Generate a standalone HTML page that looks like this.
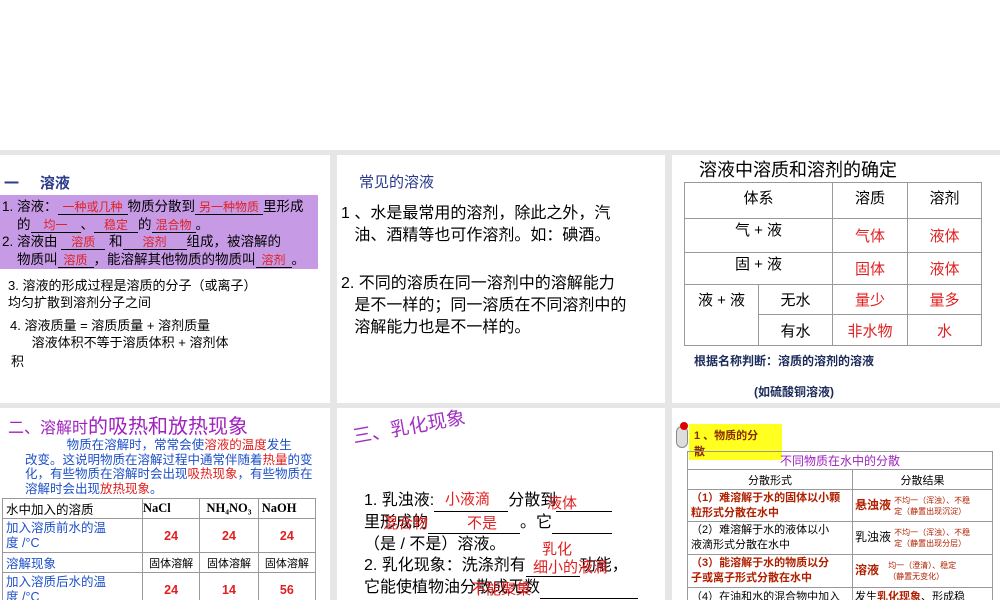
<!DOCTYPE html>
<html><head><meta charset="utf-8"><style>
*{margin:0;padding:0;box-sizing:border-box}
body{width:1000px;height:600px;background:#fff;position:relative;overflow:hidden;font-family:"Liberation Sans","Noto Sans CJK SC",sans-serif;color:#000}
.bg{position:absolute;left:0;top:150px;width:1000px;height:450px;background:#e6e6e6}
.p{position:absolute;background:#fff;overflow:hidden}
.a{position:absolute;white-space:nowrap}
.r{color:#e02020}
.u{display:inline-block;border-bottom:1px solid #000;text-align:center;color:#e02020;font-size:12px;line-height:13px}
table{border-collapse:collapse;position:absolute}
td{border:1px solid #999;text-align:center}
</style></head><body>
<div class="bg"></div>
<!-- panel 1 -->
<div class="p" style="left:0;top:155px;width:330px;height:248px">
 <div class="a" style="left:4px;top:17px;font-size:15px;color:#2a3a8a;font-weight:bold">一&nbsp;&nbsp;&nbsp;&nbsp;&nbsp;溶液</div>
 <div class="a" style="left:0;top:40px;width:318px;height:74px;background:#c79ae6"></div>
 <div class="a" style="left:2px;top:43px;font-size:13.5px;line-height:17.5px">
 1. 溶液：<span class="u" style="width:70px">一种或几种</span>物质分散到<span class="u" style="width:68px">另一种物质</span>里形成<br>
 &nbsp;&nbsp;&nbsp;&nbsp;的<span class="u" style="width:50px">均一</span>、<span class="u" style="width:44px">稳定</span>的<span class="u" style="width:44px">混合物</span>。<br>
 2. 溶液由 <span class="u" style="width:44px">溶质</span> 和<span class="u" style="width:64px">溶剂</span>组成，被溶解的<br>
 &nbsp;&nbsp;&nbsp;&nbsp;物质叫<span class="u" style="width:36px">溶质</span>，能溶解其他物质的物质叫<span class="u" style="width:36px">溶剂</span>。</div>
 <div class="a" style="left:8px;top:122px;font-size:13px;line-height:17px">3. 溶液的形成过程是溶质的分子（或离子）<br>均匀扩散到溶剂分子之间</div>
 <div class="a" style="left:10px;top:162px;font-size:13px;line-height:17px">4. 溶液质量 = 溶质质量 + 溶剂质量<br>&nbsp;&nbsp;&nbsp;&nbsp;&nbsp;&nbsp;溶液体积不等于溶质体积 + 溶剂体</div>
 <div class="a" style="left:11px;top:196px;font-size:13px">积</div>
</div>
<!-- panel 2 -->
<div class="p" style="left:337px;top:155px;width:328px;height:248px">
 <div class="a" style="left:22px;top:16px;font-size:15px;color:#2a3a8a">常见的溶液</div>
 <div class="a" style="left:4px;top:48px;font-size:16px;line-height:22px">1 、水是最常用的溶剂，除此之外，汽<br>&nbsp;&nbsp;&nbsp;油、酒精等也可作溶剂。如：碘酒。</div>
 <div class="a" style="left:4px;top:118px;font-size:16px;line-height:22px">2. 不同的溶质在同一溶剂中的溶解能力<br>&nbsp;&nbsp;&nbsp;是不一样的；同一溶质在不同溶剂中的<br>&nbsp;&nbsp;&nbsp;溶解能力也是不一样的。</div>
</div>
<!-- panel 3 -->
<div class="p" style="left:672px;top:155px;width:328px;height:248px">
 <div class="a" style="left:27px;top:1px;font-size:18px">溶液中溶质和溶剂的确定</div>
 <table style="left:12px;top:27px;width:298px;font-size:15px">
  <tr style="height:36px"><td colspan="2" style="vertical-align:top;padding-top:4px">体系</td><td style="width:75px;vertical-align:top;padding-top:4px">溶质</td><td style="width:74px;vertical-align:top;padding-top:4px">溶剂</td></tr>
  <tr style="height:34px"><td colspan="2" style="vertical-align:top">气 + 液</td><td class="r">气体</td><td class="r">液体</td></tr>
  <tr style="height:32px"><td colspan="2" style="vertical-align:top">固 + 液</td><td class="r">固体</td><td class="r">液体</td></tr>
  <tr style="height:30px"><td rowspan="2" style="width:74px;vertical-align:top;padding-top:4px">液 + 液</td><td>无水</td><td class="r">量少</td><td class="r">量多</td></tr>
  <tr style="height:31px"><td>有水</td><td class="r">非水物</td><td class="r">水</td></tr>
 </table>
 <div class="a" style="left:22px;top:197px;font-size:12px;color:#1a2a5a;font-weight:bold">根据名称判断：溶质的溶剂的溶液</div>
 <div class="a" style="left:82px;top:228px;font-size:12px;color:#1a2a5a;font-weight:bold">(如硫酸铜溶液)</div>
</div>
<!-- row 2 panel 1 -->
<div class="p" style="left:0;top:408px;width:330px;height:192px">
 <div class="a" style="left:8px;top:2px;font-size:20px;color:#a020c0"><span style="font-size:16px">二、溶解时</span>的吸热和放热现象</div>
 <div class="a" style="left:25px;top:30px;font-size:12.5px;line-height:14.5px;color:#1e50c8">&nbsp;&nbsp;&nbsp;&nbsp;&nbsp;&nbsp;&nbsp;&nbsp;&nbsp;&nbsp;&nbsp;&nbsp;物质在溶解时，常常会使<span class="r">溶液的温度</span>发生<br>改变。这说明物质在溶解过程中通常伴随着<span class="r">热量</span>的变<br>化，有些物质在溶解时会出现<span class="r">吸热现象</span>，有些物质在<br>溶解时会出现<span class="r">放热现象</span>。</div>
 <table style="left:2px;top:90px;width:314px;font-size:12.5px">
  <tr style="height:20px"><td style="text-align:left;width:140px;padding-left:3px">水中加入的溶质</td><td style="text-align:left;font-family:'Liberation Serif';font-weight:bold">NaCl</td><td style="font-family:'Liberation Serif';font-weight:bold">NH₄NO₃</td><td style="text-align:left;font-family:'Liberation Serif';font-weight:bold;padding-left:3px">NaOH</td></tr>
  <tr style="height:34px"><td style="text-align:left;color:#1e50c8;padding-left:3px;line-height:15px">加入溶质前水的温<br>度 /°C</td><td class="r" style="font-weight:bold">24</td><td class="r" style="font-weight:bold">24</td><td class="r" style="font-weight:bold">24</td></tr>
  <tr style="height:18px"><td style="text-align:left;color:#1e50c8;padding-left:3px">溶解现象</td><td style="font-size:11px">固体溶解</td><td style="font-size:11px">固体溶解</td><td style="font-size:11px">固体溶解</td></tr>
  <tr style="height:34px"><td style="text-align:left;color:#1e50c8;padding-left:3px;line-height:15px">加入溶质后水的温<br>度 /°C</td><td class="r" style="font-weight:bold">24</td><td class="r" style="font-weight:bold">14</td><td class="r" style="font-weight:bold">56</td></tr>
 </table>
</div>
<!-- row 2 panel 2 -->
<div class="p" style="left:337px;top:408px;width:328px;height:192px">
 <div class="a" style="left:18px;top:14px;font-size:19px;color:#a030c0;transform:rotate(-10deg);transform-origin:left bottom">三、乳化现象</div>
 <div class="a" style="left:27px;top:82px;font-size:16px;line-height:21px">1. 乳浊液:<span style="display:inline-block;width:74px;border-bottom:1px solid #000">&nbsp;</span>分散到<span style="display:inline-block;width:56px;border-bottom:1px solid #000">&nbsp;</span><br>里形成的<span style="display:inline-block;width:92px;border-bottom:1px solid #000">&nbsp;</span>。它<span style="display:inline-block;width:60px;border-bottom:1px solid #000">&nbsp;</span><br>（是 / 不是）溶液。<br>2. 乳化现象：洗涤剂有<span style="display:inline-block;width:54px;border-bottom:1px solid #000">&nbsp;</span>功能，<br>它能使植物油分散成无数<span style="display:inline-block;width:98px;border-bottom:1px solid #000">&nbsp;</span></div>
 <div class="a r" style="left:108px;top:80px;font-size:15px">小液滴</div>
 <div class="a r" style="left:210px;top:84px;font-size:15px">液体</div>
 <div class="a r" style="left:46px;top:104px;font-size:15px">混合物</div>
 <div class="a r" style="left:130px;top:104px;font-size:15px">不是</div>
 <div class="a r" style="left:205px;top:130px;font-size:15px">乳化</div>
 <div class="a r" style="left:196px;top:148px;font-size:15px">细小的液滴</div>
 <div class="a r" style="left:134px;top:170px;font-size:15px">不能聚集</div>
</div>
<!-- row 2 panel 3 -->
<div class="p" style="left:672px;top:408px;width:328px;height:192px">
 <div class="a" style="left:4px;top:18px;width:12px;height:22px;border-radius:6px;background:#ddd;border:1px solid #888"></div>
 <div class="a" style="left:8px;top:14px;width:8px;height:8px;background:#d00;border-radius:4px"></div>
 <div class="a" style="left:17px;top:16px;width:93px;height:36px;background:#ffff20;font-size:11px;line-height:16px;padding:4px 0 0 5px;color:#8a2a00;font-weight:bold">1 、物质的分<br>散</div>
 <table style="left:15px;top:43px;width:306px;font-size:11px">
  <tr style="height:18px"><td colspan="2" style="color:#a020c0;font-size:12px">不同物质在水中的分散</td></tr>
  <tr style="height:20px"><td style="width:165px">分散形式</td><td>分散结果</td></tr>
  <tr style="height:32px"><td style="text-align:left;color:#b02000;font-weight:bold;line-height:15px;padding-left:3px">（1）难溶解于水的固体以小颗<br>粒形式分散在水中</td><td style="text-align:left;padding-left:2px"><span style="color:#b02000;font-weight:bold;font-size:12px">悬浊液</span> <span style="color:#b02000;font-size:8px;display:inline-block;vertical-align:middle;line-height:11px">不均一（浑浊）、不稳<br>定（静置出现沉淀）</span></td></tr>
  <tr style="height:33px"><td style="text-align:left;line-height:15px;padding-left:3px">（2）难溶解于水的液体以小<br>液滴形式分散在水中</td><td style="text-align:left;padding-left:2px"><span style="font-size:12px">乳浊液</span> <span style="color:#b02000;font-size:8px;display:inline-block;vertical-align:middle;line-height:11px">不均一（浑浊）、不稳<br>定（静置出现分层）</span></td></tr>
  <tr style="height:33px"><td style="text-align:left;color:#b02000;font-weight:bold;line-height:15px;padding-left:3px">（3）能溶解于水的物质以分<br>子或离子形式分散在水中</td><td style="text-align:left;padding-left:2px"><span style="color:#b02000;font-weight:bold;font-size:12px">溶液</span> &nbsp; <span style="color:#b02000;font-size:8px;display:inline-block;vertical-align:middle;line-height:11px">均一（澄清）、稳定<br>（静置无变化）</span></td></tr>
  <tr style="height:20px"><td style="text-align:left;padding-left:3px;vertical-align:top">（4）在油和水的混合物中加入</td><td style="text-align:left;padding-left:2px;vertical-align:top">发生<span style="color:#b02000;font-weight:bold">乳化现象</span>、形成稳</td></tr>
 </table>
</div>
</body></html>
